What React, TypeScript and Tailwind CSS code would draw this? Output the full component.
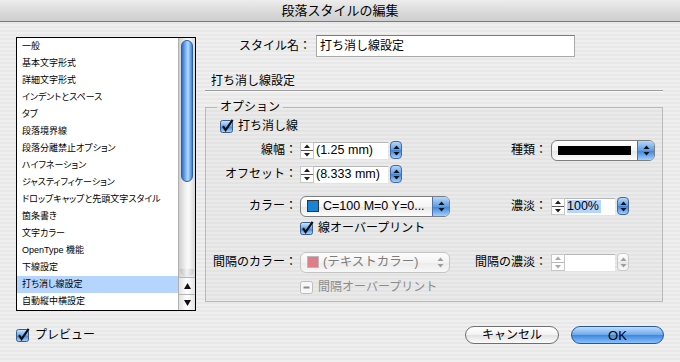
import React from 'react';

const listItems = [
  '一般',
  '基本文字形式',
  '詳細文字形式',
  'インデントとスペース',
  'タブ',
  '段落境界線',
  '段落分離禁止オプション',
  'ハイフネーション',
  'ジャスティフィケーション',
  'ドロップキャップと先頭文字スタイル',
  '箇条書き',
  '文字カラー',
  'OpenType 機能',
  '下線設定',
  '打ち消し線設定',
  '自動縦中横設定',
];

const CheckBox = () => (
  <svg width="14" height="14" viewBox="0 0 14 14" className="shrink-0">
    <defs>
      <linearGradient id="cbfill" x1="0" y1="0" x2="0" y2="1">
        <stop offset="0" stopColor="#d3e8fd" />
        <stop offset="0.5" stopColor="#6aa6ea" />
        <stop offset="0.52" stopColor="#3d86dc" />
        <stop offset="1" stopColor="#b0d8fd" />
      </linearGradient>
    </defs>
    <rect x="0.5" y="1.5" width="12" height="12" rx="2" fill="url(#cbfill)" stroke="#3b5d90" />
    <path d="M3 7.2 L5.6 11 L12.6 0.8" fill="none" stroke="#111" strokeWidth="2.2" />
  </svg>
);

const MixedBox = () => (
  <svg width="14" height="14" viewBox="0 0 14 14" className="shrink-0">
    <rect x="0.5" y="1.5" width="12" height="12" rx="2" fill="#f7f7f7" stroke="#bdbdbd" />
    <line x1="3.5" y1="7.5" x2="9.5" y2="7.5" stroke="#8a8a8a" strokeWidth="2" />
  </svg>
);

const Nudge = ({ disabled = false }: { disabled?: boolean }) => {
  const c = disabled ? '#a8a8a8' : '#1e1e1e';
  return (
    <svg width="14" height="17" viewBox="0 0 14 17" className="shrink-0">
      <rect x="0.5" y="0.5" width="13" height="16" fill="#fdfdfd" stroke="#c7c7c7" />
      <path d="M7 2.5 L10 6 L4 6Z" fill={c} />
      <line x1="1" y1="8.5" x2="13" y2="8.5" stroke={disabled ? '#b8b8b8' : '#5a5a5a'} />
      <path d="M4 11 L10 11 L7 14.5Z" fill={c} />
    </svg>
  );
};

const Arrows = ({ color }: { color: string }) => (
  <svg width="7" height="11" viewBox="0 0 7 11">
    <path d="M3.5 0.5 L6.5 4 L0.5 4Z" fill={color} />
    <path d="M0.5 7 L6.5 7 L3.5 10.5Z" fill={color} />
  </svg>
);

const Stepper = ({ disabled = false }: { disabled?: boolean }) => (
  <div
    className={
      disabled
        ? 'w-[12px] h-[18px] rounded-[4px] border border-[#c9c9c9] bg-[linear-gradient(to_bottom,#fdfdfd,#f0f0f0_50%,#e6e6e6_52%,#fafafa)] flex items-center justify-center'
        : 'w-[12px] h-[18px] rounded-[4px] border border-[#45689e] bg-[linear-gradient(to_bottom,#b6d7fa,#5d9de7_50%,#3b84dc_52%,#9fd0ff)] flex items-center justify-center'
    }
  >
    <Arrows color={disabled ? '#9d9d9d' : '#111'} />
  </div>
);

const SpinField = ({
  value,
  width,
  selected = false,
  disabled = false,
}: {
  value: string;
  width: string;
  selected?: boolean;
  disabled?: boolean;
}) => (
  <div className="flex items-center">
    <Nudge disabled={disabled} />
    <div className={`${width} h-[17px] bg-white border-t border-[#b8b8b8] flex items-center pl-[2px] text-[12.5px] leading-none`}>
      {selected ? <span className="bg-[#b5d5ff] pr-[2px]">{value}</span> : value}
    </div>
    <div className="ml-[2px]">
      <Stepper disabled={disabled} />
    </div>
  </div>
);

const Popup = ({
  width,
  disabled = false,
  children,
}: {
  width: string;
  disabled?: boolean;
  children: React.ReactNode;
}) => (
  <div
    className={`${width} h-[21px] rounded-[6px] border flex overflow-hidden ${
      disabled
        ? 'border-[#c4c4c4] bg-[linear-gradient(to_bottom,#fcfcfc,#f3f3f3_50%,#ebebeb_52%,#f8f8f8)] text-[#7c7c7c]'
        : 'border-[#7e7e7e] bg-[linear-gradient(to_bottom,#ffffff,#f4f4f4_50%,#e6e6e6_52%,#fdfdfd)] text-black'
    }`}
  >
    <div className="flex-1 flex items-center pl-[6px] gap-[4px] min-w-0 text-[12.5px] leading-none whitespace-nowrap overflow-hidden">
      {children}
    </div>
    <div
      className={
        disabled
          ? 'w-[17px] flex items-center justify-center'
          : 'w-[17px] flex items-center justify-center border-l border-[#4f73a8] bg-[linear-gradient(to_bottom,#b6d7fa,#5d9de7_50%,#3b84dc_52%,#9fd0ff)]'
      }
    >
      <Arrows color={disabled ? '#9d9d9d' : '#111'} />
    </div>
  </div>
);

export default function App() {
  return (
    <div className="w-[680px] h-[362px] overflow-hidden text-black font-['Liberation_Sans','Noto_Sans_CJK_JP',sans-serif] bg-[repeating-linear-gradient(to_bottom,#efefef_0px,#efefef_2px,#e8e8e8_2px,#e8e8e8_4px)]">
      {/* title bar */}
      <div className="h-[22px] flex items-center justify-center border-b border-[#7a7a7a] bg-[linear-gradient(to_bottom,#ededed,#d9d9d9_60%,#cfcfcf)] text-[13px] leading-none">
        段落スタイルの編集
      </div>

      <div className="flex pl-[16px] pt-[13px]">
        {/* category list */}
        <div className="mt-[2px] w-[180px] h-[274px] border border-black bg-white flex">
          <div className="w-[161px] flex flex-col">
            {listItems.map((item, i) => (
              <div
                key={item}
                className={`h-[17px] flex items-center pl-[5px] text-[9px] leading-none whitespace-nowrap [font-feature-settings:'palt'] ${
                  i === 14 ? 'bg-[#b5d5ff]' : ''
                }`}
              >
                {item}
              </div>
            ))}
          </div>
          <div className="w-[17px] flex flex-col bg-[linear-gradient(to_right,#cfcfcf,#f4f4f4_45%,#fafafa_60%,#d9d9d9)] border-l border-[#b0b0b0]">
            <div className="mx-[2px] mt-[2px] h-[142px] rounded-full border border-[#2d5fa6] bg-[linear-gradient(to_right,#2f6fd0,#8fc3f6_45%,#b3dbff_60%,#3f84dc)]" />
            <div className="flex-1" />
            <div className="h-[8px] rounded-b-full mx-[1px] bg-[linear-gradient(to_right,#bdbdbd,#f2f2f2_50%,#c9c9c9)]" />
            <div className="h-[17px] flex items-center justify-center border-t border-[#b5b5b5] bg-[linear-gradient(to_right,#e2e2e2,#ffffff_50%,#e4e4e4)]">
              <svg width="7" height="6" viewBox="0 0 7 6">
                <path d="M3.5 0 L7 6 L0 6Z" fill="#111" />
              </svg>
            </div>
            <div className="h-[16px] flex items-center justify-center border-t border-[#b5b5b5] bg-[linear-gradient(to_right,#e2e2e2,#ffffff_50%,#e4e4e4)]">
              <svg width="7" height="6" viewBox="0 0 7 6">
                <path d="M0 0 L7 0 L3.5 6Z" fill="#111" />
              </svg>
            </div>
          </div>
        </div>

        {/* right pane */}
        <div className="ml-[9px] w-[458px] flex flex-col">
          <div className="flex items-center h-[22px]">
            <div className="w-[106px] text-right text-[12px] leading-none">スタイル名：</div>
            <div className="ml-[5px] w-[259px] h-[22px] bg-white border border-[#a9a9a9] border-t-[#7d7d7d] flex items-center pl-[3px] text-[12px] leading-none">
              打ち消し線設定
            </div>
          </div>

          <div className="mt-[18px] h-[16px] pl-[6px] text-[12px] leading-none border-b border-[#9e9e9e]">
            打ち消し線設定
          </div>
          <div className="h-px bg-white/70" />

          <fieldset className="mt-[7px] h-[203px] min-w-0 border border-[#b9b9b9] bg-black/[0.02]">
            <legend className="ml-[11px] px-[3px] text-[12px] leading-[16px]">オプション</legend>

            <div className="mt-[2px] h-[18px] flex items-center pl-[14px] gap-[4px] text-[12px] leading-none">
              <CheckBox />
              <span>打ち消し線</span>
            </div>

            <div className="mt-[4px] h-[22px] flex items-center text-[12px] leading-none">
              <div className="w-[91px] text-right">線幅：</div>
              <div className="ml-[3px] w-[150px]">
                <SpinField value="(1.25 mm)" width="w-[74px]" />
              </div>
              <div className="w-[97px] text-right">種類：</div>
              <div className="ml-[4px]">
                <Popup width="w-[104px]">
                  <div className="w-[73px] h-[9px] bg-black" />
                </Popup>
              </div>
            </div>

            <div className="mt-[2px] h-[22px] flex items-center text-[12px] leading-none">
              <div className="w-[91px] text-right">オフセット：</div>
              <div className="ml-[3px] w-[150px]">
                <SpinField value="(8.333 mm)" width="w-[74px]" />
              </div>
            </div>

            <div className="mt-[10px] h-[22px] flex items-center text-[12px] leading-none">
              <div className="w-[91px] text-right">カラー：</div>
              <div className="ml-[3px] w-[150px]">
                <Popup width="w-[150px]">
                  <div className="w-[12px] h-[12px] shrink-0 bg-[#1784d8] border border-[#333]" />
                  <span>C=100 M=0 Y=0...</span>
                </Popup>
              </div>
              <div className="w-[97px] text-right">濃淡：</div>
              <div className="ml-[4px]">
                <SpinField value="100%" width="w-[50px]" selected />
              </div>
            </div>

            <div className="mt-[2px] h-[18px] flex items-center pl-[94px] gap-[4px] text-[12px] leading-none">
              <CheckBox />
              <span>線オーバープリント</span>
            </div>

            <div className="mt-[14px] h-[22px] flex items-center text-[12px] leading-none">
              <div className="w-[91px] text-right">間隔のカラー：</div>
              <div className="ml-[3px] w-[150px]">
                <Popup width="w-[150px]" disabled>
                  <div className="w-[12px] h-[12px] shrink-0 bg-[#df7d88] border border-[#b9b9b9]" />
                  <span>(テキストカラー)</span>
                </Popup>
              </div>
              <div className="w-[97px] text-right">間隔の濃淡：</div>
              <div className="ml-[4px]">
                <SpinField value="" width="w-[50px]" disabled />
              </div>
            </div>

            <div className="mt-[5px] h-[18px] flex items-center pl-[94px] gap-[4px] text-[12px] leading-none text-[#8c8c8c]">
              <MixedBox />
              <span>間隔オーバープリント</span>
            </div>
          </fieldset>
        </div>
      </div>

      {/* bottom row */}
      <div className="mt-[15px] h-[18px] flex items-center justify-between pl-[16px] pr-[16px]">
        <div className="flex items-center gap-[5px] text-[12px] leading-none">
          <CheckBox />
          <span>プレビュー</span>
        </div>
        <div className="flex items-center gap-[12px]">
          <div className="w-[94px] h-[18px] rounded-full border border-[#6f6f6f] bg-[linear-gradient(to_bottom,#ffffff,#f2f2f2_50%,#e2e2e2_52%,#fbfbfb)] flex items-center justify-center text-[12px] leading-none">
            キャンセル
          </div>
          <div className="w-[93px] h-[18px] rounded-full border border-[#2c5797] bg-[linear-gradient(to_bottom,#c0defc,#6ea9ee_48%,#3f86de_52%,#86c2fd)] flex items-center justify-center text-[13px] leading-none">
            OK
          </div>
        </div>
      </div>
    </div>
  );
}
